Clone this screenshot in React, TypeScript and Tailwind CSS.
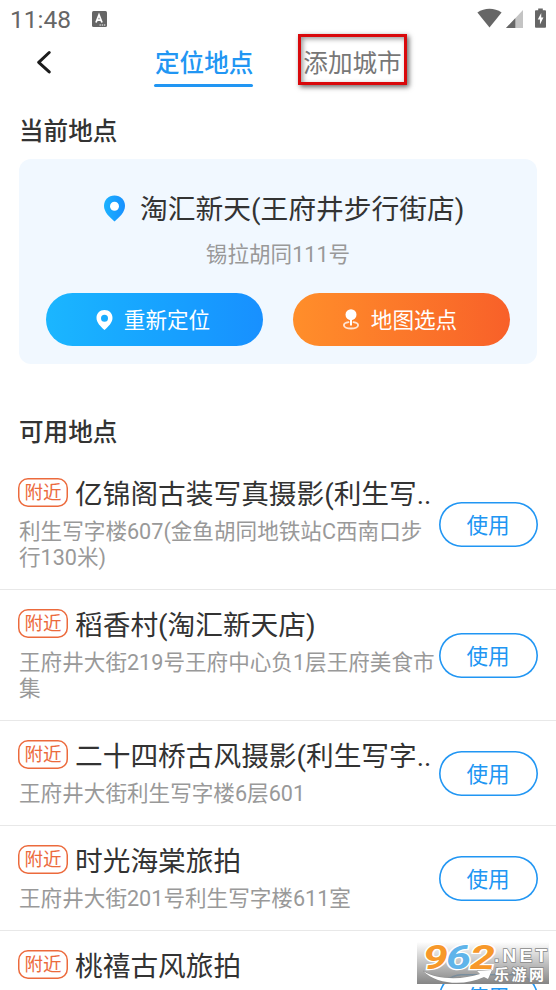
import type { ReactNode } from "react";

type Place = {
  name: string;
  address: string;
};

const places: Place[] = [
  { name: "亿锦阁古装写真摄影(利生写..", address: "利生写字楼607(金鱼胡同地铁站C西南口步行130米)" },
  { name: "稻香村(淘汇新天店)", address: "王府井大街219号王府中心负1层王府美食市集" },
  { name: "二十四桥古风摄影(利生写字..", address: "王府井大街利生写字楼6层601" },
  { name: "时光海棠旅拍", address: "王府井大街201号利生写字楼611室" },
  { name: "桃禧古风旅拍", address: "" },
];

function StatusBar() {
  return (
    <div className="flex h-[38px] shrink-0 items-center pl-[10px] pr-[9px] text-[#666]">
      <span className="w-[61px] pt-px text-[24.5px] leading-[37px]">11:48</span>
      <svg width="15" height="16" viewBox="0 0 15 16" className="ml-[21px]">
        <rect width="15" height="16" rx="1.5" fill="#666" />
        <path d="M4 11.5 7 4l3 7.5M5.2 9.2h3.6" stroke="#fff" strokeWidth="1.8" fill="none" />
        <path d="M7.5 14h6" stroke="#fff" strokeWidth="1" strokeDasharray="1.4 .8" />
      </svg>
      <div className="-mt-[2px] ml-auto mr-px flex items-center">
        <svg width="25" height="20" viewBox="0 0 25 20">
          <path d="M.4 4.6C7.5-.4 17.5-.4 24.6 4.6L12.5 19.4Z" fill="#666" />
        </svg>
        <svg width="17" height="18" viewBox="0 0 17 18" className="ml-1 mt-[2px]">
          <path d="M17 0V18H0Z" fill="#c4c4c4" />
          <path d="M9.3 8.2V18H0Z" fill="#666" />
        </svg>
        <svg width="11" height="20" viewBox="0 0 12 21" className="ml-3">
          <path d="M3.5 0h5v2H11a1 1 0 0 1 1 1v17a1 1 0 0 1-1 1H1a1 1 0 0 1-1-1V3a1 1 0 0 1 1-1h2.5Z" fill="#666" />
          <path d="M6.8 5 3 12.2h2.4v5.3L9.2 10H6.8Z" fill="#fff" />
        </svg>
      </div>
    </div>
  );
}

function Header() {
  return (
    <header className="flex h-[50px] shrink-0 items-start">
      <svg width="16" height="24" viewBox="0 0 16 24" className="ml-[36px] mt-3">
        <path d="M13.2 2.5 2.7 12.3l10.5 9.6" fill="none" stroke="#1c1c1c" strokeWidth="3" strokeLinecap="round" strokeLinejoin="round" />
      </svg>
      <div className="ml-[102px] flex w-[99px] flex-col">
        <span className="mt-[6px] whitespace-nowrap pl-px text-[24.6px] font-medium leading-[40px] text-[#2196f3]">定位地点</span>
        <span className="h-[3px] rounded-full bg-[#2196f3]" />
      </div>
      <div className="-mt-1 ml-[45px] flex h-[51px] w-[109px] items-center justify-center border-[3px] border-[#d9090c] shadow-[2px_2px_5px_rgba(0,0,0,0.6),inset_2px_2px_5px_rgba(0,0,0,0.4)]">
        <span className="mt-[8px] whitespace-nowrap text-[24.6px] leading-[40px] text-[#777]">添加城市</span>
      </div>
    </header>
  );
}

function ActionButton({ icon, label, className }: { icon: ReactNode; label: string; className: string }) {
  return (
    <button type="button" className={`flex h-[53px] w-[217px] items-center justify-center rounded-full pr-[3px] text-[21.6px] text-white ${className}`}>
      {icon}
      <span className="pt-[3px]">{label}</span>
    </button>
  );
}

function CurrentPlace() {
  return (
    <section className="mx-[19px] mt-[9px] flex h-[205px] shrink-0 flex-col rounded-xl bg-[#f1f8ff]">
      <div className="mt-[29px] flex h-10 items-center pl-[84px]">
        <svg width="23" height="27" viewBox="0 0 23 27">
          <defs>
            <linearGradient id="pin">
              <stop stopColor="#1bb2ff" />
              <stop offset="1" stopColor="#1890ff" />
            </linearGradient>
          </defs>
          <path d="M11.5.5C5.3.5 1 5 1 11c0 6 5.5 11.2 10.5 15.5C16.5 22.2 22 17 22 11 22 5 17.7.5 11.5.5Z" fill="url(#pin)" />
          <circle cx="11.5" cy="11.2" r="4.5" fill="#fff" />
        </svg>
        <span className="ml-[14px] whitespace-nowrap pt-[4px] text-[27.75px] leading-[40px] text-[#333]">淘汇新天(王府井步行街店)</span>
      </div>
      <p className="mt-[11px] text-center text-[21.6px] leading-[32px] text-[#999]">锡拉胡同111号</p>
      <div className="mt-[22px] flex justify-between px-[27px]">
        <ActionButton
          label="重新定位"
          className="bg-linear-to-r from-[#1bb6ff] to-[#1890ff]"
          icon={
            <svg width="17" height="20" viewBox="0 0 17 20" className="mr-[11px]">
              <path fillRule="evenodd" d="M8.5 0C3.7 0 .5 3.5.5 8c0 4.5 4 8.5 8 12 4-3.5 8-7.500 8-12 0-4.500-3.200-8-8-8Zm0 4.700a3.500 3.500 0 1 1 0 7 3.500 3.500 0 0 1 0-7Z" fill="#fff" />
            </svg>
          }
        />
        <ActionButton
          label="地图选点"
          className="bg-linear-to-r from-[#ff8e2a] to-[#f86029]"
          icon={
            <svg width="16" height="21" viewBox="0 0 16 21" className="mr-3">
              <circle cx="8" cy="5.7" r="5.5" fill="#fff" />
              <path d="M8 9v7.5" stroke="#fff" strokeWidth="2" />
              <path d="M5.5 13.2C2.7 13.7.9 14.8.9 16.2c0 1.9 3.2 3.3 7.1 3.300s7.100-1.400 7.100-3.300c0-1.400-1.800-2.500-4.600-3" fill="none" stroke="#ffe5d3" strokeWidth="1.8" strokeLinecap="round" />
            </svg>
          }
        />
      </div>
    </section>
  );
}

function PlaceRow({ name, address }: Place) {
  return (
    <li className="flex shrink-0 items-center justify-between border-b border-[#e8e8e8] pb-[18px] pl-[18px] pr-[18px] pt-[15px] last:h-[131px]">
      <div className="w-[420px] shrink-0 self-start">
        <div className="flex h-[38px] items-center">
          <span className="-mt-px flex h-[29px] w-[50px] shrink-0 items-center justify-center rounded-[10px] pt-px text-[18.5px] leading-none text-[#ec6a3c] inset-shadow-[0_0_0_1.5px_#ec6a3c]">
            附近
          </span>
          <span className="ml-[7px] whitespace-nowrap pt-[3px] text-[27.7px] leading-[38px] text-[#333]">{name}</span>
        </div>
        <p className="mt-[7px] min-h-[26px] break-all pl-px text-[21.6px] leading-[26px] text-[#999]">{address}</p>
      </div>
      <button type="button" className="-ml-2 mt-[3px] h-[45px] w-[99px] shrink-0 rounded-full pr-px pt-[3px] text-[21.6px] leading-none text-[#2196f3] inset-shadow-[0_0_0_1.6px_#2196f3]">
        使用
      </button>
    </li>
  );
}

function Watermark() {
  return (
    <div className="absolute left-[417px] top-[942px] h-[42px] w-[132px] bg-linear-to-b from-white/20 to-[#858585]">
      <svg width="132" height="42" viewBox="0 0 132 42" fontFamily="Liberation Sans, Noto Sans CJK SC, sans-serif" fontWeight="bold">
        <g fontFamily="Roboto, sans-serif" fontSize="33" fontStyle="italic" stroke="#fff" strokeWidth="2.5" paintOrder="stroke">
          <text x="6" y="26.5" textLength="25" lengthAdjust="spacingAndGlyphs" fill="#f7982a">9</text>
          <text x="29" y="26.5" textLength="25" lengthAdjust="spacingAndGlyphs" fill="#5fb4ea">6</text>
          <text x="53" y="26.5" textLength="25" lengthAdjust="spacingAndGlyphs" fill="#f7982a">2</text>
        </g>
        <g fill="#fff" stroke="#888" strokeWidth="1.5" paintOrder="stroke">
          <text x="77" y="20" fontSize="19" textLength="53" lengthAdjust="spacing">.NET</text>
          <text x="77" y="38" fontSize="15" textLength="50">乐游网</text>
          <path d="M6 29C20 38 45 38 63 32l-3-3 15-1-4 9-4-2C48 44 20 43 6 29Z" strokeWidth=".7" />
        </g>
      </svg>
    </div>
  );
}

export default function App() {
  return (
    <div className="relative flex h-[990px] w-[556px] flex-col overflow-hidden bg-white font-[Roboto,'Noto_Sans_CJK_SC',sans-serif]">
      <StatusBar />
      <Header />
      <h2 className="mt-[26px] shrink-0 pl-[19px] text-[24.6px] font-medium leading-[36px] text-[#333]">当前地点</h2>
      <CurrentPlace />
      <h2 className="mt-[51px] shrink-0 pl-[19px] text-[24.6px] font-medium leading-[36px] text-[#333]">可用地点</h2>
      <ul className="mt-[8px] flex flex-col">
        {places.map((place) => (
          <PlaceRow key={place.name} {...place} />
        ))}
      </ul>
      <Watermark />
    </div>
  );
}
